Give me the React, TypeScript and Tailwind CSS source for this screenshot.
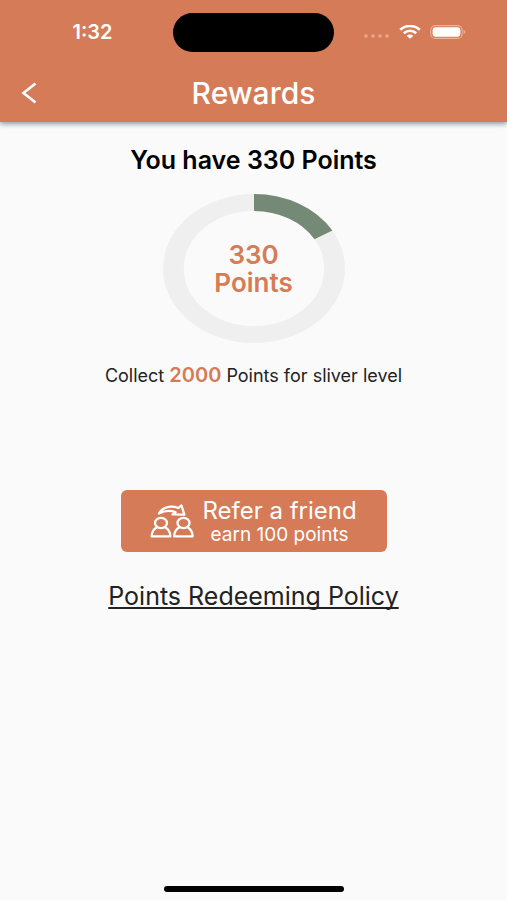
const POINTS = 330;
const NEXT_LEVEL = 2000;

const StatusBar = () => (
  <div className="grid h-16 grid-cols-[1fr_161px_1fr] items-center">
    <span className="pl-3 text-center text-xl leading-6 font-semibold">1:32</span>
    <div className="h-[39px] rounded-full bg-black" />
    <div className="flex items-center pl-[30px]">
      <svg className="mt-2 h-1 w-[25px]" viewBox="0 0 25 4" fill="#e9a98c">
        <circle cx="2" cy="2" r="1.8" />
        <circle cx="9" cy="2" r="1.8" />
        <circle cx="16" cy="2" r="1.8" />
        <circle cx="23" cy="2" r="1.8" />
      </svg>
      <svg className="ml-[10px] h-[14px] w-[22px]" viewBox="0 0 22 14" fill="none" stroke="white">
        <path d="M1.2 4.8C6.8-.3 15.2-.3 20.8 4.8" strokeWidth="2.7" />
        <path d="M4.8 8.2C8.4 5 13.6 5 17.2 8.2" strokeWidth="2.6" />
        <path d="M11 13.8L7.6 10.8C9.6 9.2 12.4 9.2 14.4 10.8Z" fill="white" stroke="none" />
      </svg>
      <svg className="ml-[9px] h-[14px] w-9" viewBox="0 0 36 14" fill="none">
        <rect x=".8" y=".6" width="31.4" height="12.8" rx="4.5" stroke="#ebb298" strokeWidth="1.1" />
        <rect x="2.6" y="2.2" width="27.8" height="9.6" rx="3" fill="white" />
        <path d="M33.6 4.8c2.2.7 2.2 3.7 0 4.4z" fill="#ebb298" />
      </svg>
    </div>
  </div>
);

const PointsRing = () => (
  <div className="relative mt-5 flex h-[149px] w-[182px] items-center justify-center">
    <svg
      className="absolute inset-0 h-full w-full"
      viewBox="0 0 100 100"
      preserveAspectRatio="none"
      fill="none"
      strokeWidth="11.4"
    >
      <circle cx="50" cy="50" r="44.3" stroke="#efefef" />
      <circle
        cx="50"
        cy="50"
        r="44.3"
        stroke="#758a76"
        pathLength="100"
        strokeDasharray={`${(POINTS / NEXT_LEVEL) * 100} 100`}
        transform="rotate(-90 50 50)"
      />
    </svg>
    <p className="relative text-center text-[26px] leading-7 font-semibold text-[#d67b55]">
      {POINTS}
      <br />
      Points
    </p>
  </div>
);

const ReferIcon = () => (
  <svg
    className="h-[34px] w-11 shrink-0"
    viewBox="0 0 44 34"
    fill="none"
    stroke="white"
    strokeWidth="2.3"
    strokeLinejoin="round"
    strokeLinecap="round"
  >
    <path d="M9 9.4C12 3.6 20 .8 28.5 4L31.4 1.4L34.4 10.6L22.5 10.4L25.6 8.2C20 6 14 7 9 9.4Z" />
    <ellipse cx="11" cy="19" rx="6" ry="5.2" />
    <ellipse cx="33.5" cy="19" rx="6" ry="5.2" />
    <path d="M7 23.2C3.6 25 1.7 28 1.7 32.4H20.3C20.3 28 18.4 25 15 23.2" />
    <path d="M29.5 23.2C26.1 25 24.2 28 24.2 32.4H42.6C42.6 28 40.9 25 37.5 23.2" />
  </svg>
);

const App = () => {
  return (
    <div className="flex min-h-screen flex-col bg-[#fafafa] font-['Inter',sans-serif] text-[#222]">
      <header className="bg-[#d57b57] text-white shadow-[0_2px_5px_rgba(0,0,0,0.4)]">
        <StatusBar />
        <div className="grid h-[58px] grid-cols-[58px_1fr_58px] items-center">
          <button type="button" aria-label="Back" className="flex h-full items-center pl-5">
            <svg className="h-[22px] w-[18px]" viewBox="0 0 18 22" fill="none" stroke="white" strokeWidth="2.6">
              <path d="M15.5 1.5L3.5 11L15.5 20.5" />
            </svg>
          </button>
          <h1 className="text-center text-[30px] leading-8 font-medium">Rewards</h1>
        </div>
      </header>

      <main className="flex flex-1 flex-col items-center pt-6">
        <h2 className="text-[25px] leading-7 font-semibold text-black">You have {POINTS} Points</h2>

        <PointsRing />

        <p className="mt-5 text-lg leading-6">
          Collect <span className="text-xl leading-6 font-semibold text-[#d67b55]">{NEXT_LEVEL}</span> Points for
          sliver level
        </p>

        <button
          type="button"
          className="mt-[102px] flex h-[62px] w-[266px] items-center justify-center gap-2 rounded-md bg-[#d57b57] text-white"
        >
          <ReferIcon />
          <span className="flex flex-col items-center">
            <span className="text-2xl leading-7">Refer a friend</span>
            <span className="text-[19px] leading-5">earn 100 points</span>
          </span>
        </button>

        <a
          href="#policy"
          className="mt-[30px] text-[25px] leading-7 underline decoration-2 underline-offset-2 [text-decoration-skip-ink:none]"
        >
          Points Redeeming Policy
        </a>
      </main>

      <footer className="flex justify-center pb-2">
        <div className="h-[6px] w-[180px] rounded-full bg-black" />
      </footer>
    </div>
  );
};

export default App;
